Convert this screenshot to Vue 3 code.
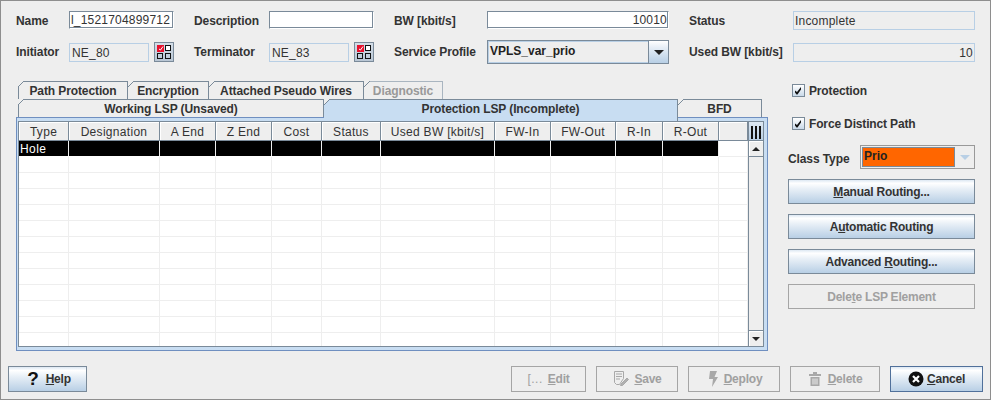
<script setup>
const cols = [
  { t: 'Type', w: 50 }, { t: 'Designation', w: 91 }, { t: 'A End', w: 56 }, { t: 'Z End', w: 56 },
  { t: 'Cost', w: 50 }, { t: 'Status', w: 59 }, { t: 'Used BW [kbit/s]', w: 114 }, { t: 'FW-In', w: 56 },
  { t: 'FW-Out', w: 65 }, { t: 'R-In', w: 47 }, { t: 'R-Out', w: 56 }, { t: '', w: 29 }
]
const gridCols = cols.map(c => c.w + 'px').join(' ')
const emptyRows = Array.from({ length: 12 }, (_, i) => i)
const tabsTop = [
  { t: 'Path Protection', w: 110 }, { t: 'Encryption', w: 81 },
  { t: 'Attached Pseudo Wires', w: 155 }, { t: 'Diagnostic', w: 79, dis: true }
]
</script>

<template>
  <div class="win">
    <div class="form">
      <span class="lab">Name</span>
      <input class="edit" value="l_1521704899712" />
      <span class="lab">Description</span>
      <input class="edit" value="" />
      <span class="lab">BW [kbit/s]</span>
      <input class="edit right" value="10010" />
      <span class="lab">Status</span>
      <div class="ro">Incomplete</div>

      <span class="lab">Initiator</span>
      <div class="pick">
        <div class="ro short">NE_80</div>
        <button class="gridbtn"><svg width="18" height="18" viewBox="0 0 18 18"><rect x="2.5" y="2.5" width="6" height="6" fill="#e8112d" stroke="#e8112d"/><path d="M4 6l1.500 1L8 3.500" stroke="#fff" fill="none"/><rect x="10.500" y="2.500" width="5" height="5" fill="#fff" stroke="#111"/><rect x="2.500" y="10.500" width="5" height="5" fill="none" stroke="#111"/><rect x="10.500" y="10.500" width="5" height="5" fill="none" stroke="#111"/></svg></button>
      </div>
      <span class="lab">Terminator</span>
      <div class="pick">
        <div class="ro short">NE_83</div>
        <button class="gridbtn"><svg width="18" height="18" viewBox="0 0 18 18"><rect x="2.5" y="2.5" width="6" height="6" fill="#e8112d" stroke="#e8112d"/><path d="M4 6l1.500 1L8 3.500" stroke="#fff" fill="none"/><rect x="10.500" y="2.500" width="5" height="5" fill="#fff" stroke="#111"/><rect x="2.500" y="10.500" width="5" height="5" fill="none" stroke="#111"/><rect x="10.500" y="10.500" width="5" height="5" fill="none" stroke="#111"/></svg></button>
      </div>
      <span class="lab">Service Profile</span>
      <div class="combo">
        <div class="combo-val">VPLS_var_prio</div>
        <div class="combo-btn"><i class="tri"></i></div>
      </div>
      <span class="lab">Used BW [kbit/s]</span>
      <div class="ro right">10</div>
    </div>

    <div class="main">
      <div class="tabs">
        <div class="tabrow first">
          <div v-for="tab in tabsTop" :key="tab.t" class="tab" :class="{ dis: tab.dis }" :style="{ width: tab.w + 'px' }">{{ tab.t }}</div>
        </div>
        <div class="tabrow second">
          <div class="tab" style="width: 306px">Working LSP (Unsaved)</div>
          <div class="tab sel" style="width: 354px">Protection LSP (Incomplete)</div>
          <div class="tab" style="width: 84px">BFD</div>
        </div>
        <div class="panel">
          <div class="tablebox">
            <div class="tablecol">
              <div class="thead" :style="{ gridTemplateColumns: gridCols }">
                <div v-for="c in cols" :key="c.t" class="th">{{ c.t }}</div>
              </div>
              <div class="trow hole" :style="{ gridTemplateColumns: gridCols }">
                <div v-for="(c, i) in cols" :key="c.t" class="td" :class="{ black: i < 11 }">{{ i === 0 ? 'Hole' : '' }}</div>
              </div>
              <div v-for="r in emptyRows" :key="r" class="trow" :style="{ gridTemplateColumns: gridCols }">
                <div v-for="c in cols" :key="c.t" class="td"></div>
              </div>
            </div>
            <div class="sb">
              <div class="corner"><i></i><i></i><i></i></div>
              <div class="arrow"><i class="up"></i></div>
              <div class="track"></div>
              <div class="arrow bottom"><i class="tri small"></i></div>
            </div>
          </div>
        </div>
      </div>

      <div class="side">
        <label class="chk"><span class="box"><svg width="11" height="11" viewBox="0 0 11 11"><path d="M2 5.500l2 1.500 4-5v2.500L4.500 9.500H3.500L2 7.500z" fill="#111"/></svg></span>Protection</label>
        <label class="chk second-chk"><span class="box"><svg width="11" height="11" viewBox="0 0 11 11"><path d="M2 5.500l2 1.500 4-5v2.500L4.500 9.500H3.500L2 7.500z" fill="#111"/></svg></span>Force Distinct Path</label>
        <div class="classrow">
          <span class="lab norm">Class Type</span>
          <div class="ccombo">
            <div class="orange">Prio</div>
            <div class="cbtn"><i class="tri pale"></i></div>
          </div>
        </div>
        <button class="btn rt"><u>M</u>anual Routing...</button>
        <button class="btn rt">A<u>u</u>tomatic Routing</button>
        <button class="btn rt">Advanced <u>R</u>outing...</button>
        <button class="btn rt off">Dele<u>t</u>e LSP Element</button>
      </div>
    </div>

    <div class="foot">
      <button class="btn fb help"><span class="q">?</span><span><u>H</u>elp</span></button>
      <div class="spring"></div>
      <button class="btn fb off edit-b"><span class="brk">[...</span><span><u>E</u>dit</span></button>
      <button class="btn fb off save-b">
        <svg width="18" height="18" viewBox="0 0 18 18" fill="none" stroke="#a8a8a8"><path d="M2.500 1.500h9v7l-4 6h-3l-2-2z"/><path d="M4 4h6M4 6.500h6M4 9h4" /><path d="M9 14l6-6 1.500 1.500-6 6H8.500z" fill="#b0b0b0"/></svg>
        <span><u>S</u>ave</span>
      </button>
      <button class="btn fb off deploy-b">
        <svg width="14" height="18" viewBox="0 0 14 18"><path d="M4 1h7L8.500 7H12L6 17l1-8H3z" fill="#a8a8a8"/></svg>
        <span><u>D</u>eploy</span>
      </button>
      <button class="btn fb off del-b">
        <svg width="14" height="18" viewBox="0 0 14 18"><path d="M1 4h12v2H1zM5 2h4v2H5zM2.500 7h9v9h-9z" fill="#a8a8a8"/><path d="M5 8.500v6M7 8.500v6M9 8.500v6" stroke="#eee"/></svg>
        <span><u>D</u>elete</span>
      </button>
      <button class="btn fb cancel-b">
        <svg width="16" height="16" viewBox="0 0 16 16"><circle cx="8" cy="8" r="7.500" fill="#111"/><path d="M5 5l6 6M11 5l-6 6" stroke="#fff" stroke-width="2.200"/></svg>
        <span><u>C</u>ancel</span>
      </button>
    </div>
  </div>
</template>

<style scoped>
.win {
  width: 991px;
  height: 400px;
  box-sizing: border-box;
  border: 1px solid #8e8e8e;
  background: #eeeeee;
  font: 12px "Liberation Sans", Arial, sans-serif;
  color: #333;
  overflow: hidden;
}
.form {
  display: grid;
  grid-template-columns: 53px 125px 75px 125px 93px 202px 104px 182px;
  grid-template-rows: 19px 24px;
  row-gap: 10px;
  padding: 10px 0 0 15px;
  align-items: center;
}
.lab { font-weight: bold; color: #333; white-space: nowrap; letter-spacing: -0.1px; }
.edit {
  box-sizing: border-box;
  width: 105px;
  height: 18px;
  border: 1px solid #7a8a99;
  border-right-color: #fff;
  border-bottom-color: #fff;
  background: #fff;
  padding: 0 1px;
  font: 12px "Liberation Sans", Arial, sans-serif;
  letter-spacing: 0.2px;
  color: #333;
  outline: none;
  align-self: start;
  box-shadow: inset -1px -1px 0 #7a8a99;
}
.edit.right { width: 182px; text-align: right; }
.ro {
  box-sizing: border-box;
  width: 182px;
  height: 19px;
  line-height: 18px;
  padding: 0 1px;
  border: 1px solid #b8cfe5;
  background: #eeeeee;
  color: #333;
  letter-spacing: 0.2px;
}
.ro.right { text-align: right; }
.ro.short { width: 80px; padding-left: 2px; }
.pick { display: flex; align-items: center; gap: 5px; }
.gridbtn {
  width: 20px;
  height: 20px;
  padding: 0;
  border: 1px solid #7a8a99;
  background: linear-gradient(#d4dde7, #b9c6d4);
  display: flex;
  align-items: center;
  justify-content: center;
}
.combo {
  box-sizing: border-box;
  width: 182px;
  height: 24px;
  border: 1px solid #7a8a99;
  display: flex;
}
.combo-val {
  flex: 1;
  background: #eeeeee;
  border: 1px solid #b8cfe5;
  border-width: 1px 0 1px 1px;
  padding-left: 1px;
  font-weight: bold;
  color: #222;
  line-height: 18px;
}
.combo-btn {
  width: 19px;
  border-left: 1px solid #7a8a99;
  background: linear-gradient(#fff, #e6eef6 30%, #b8cfe5);
  display: flex;
  align-items: center;
  justify-content: center;
}
.tri { width: 0; height: 0; border: 5px solid transparent; border-top: 5px solid #222; border-bottom: 0; display: block; }
.tri.pale { border-top-color: #b8cfe5; }
.tri.small { border-width: 4px 4px 0; }
.main { display: flex; gap: 20px; margin: 17px 0 0 15px; height: 270px; }
.tabs { width: 752px; }
.tabrow { display: flex; height: 18px; padding-left: 2px; }
.tab {
  box-sizing: border-box;
  position: relative;
  height: 18px;
  border: 1px solid #7a8a99;
  border-bottom: 0;
  text-align: center;
  font-weight: bold;
  color: #333;
  line-height: 19px;
  background: #eeeeee;
  letter-spacing: -0.1px;
}
.tab + .tab { border-left: 0; }
.tab::before {
  content: "";
  position: absolute;
  top: -1px;
  left: -1px;
  width: 6px;
  height: 6px;
  background: linear-gradient(135deg, #eee 42%, #7a8a99 42%, #7a8a99 58%, transparent 58%);
}
.tab + .tab::before { left: 0; }
.tab.dis { color: #999; border-color: #a9b5c0; }
.tab.sel {
  height: 23px;
  background: #c8ddf2;
  z-index: 1;
}
.panel {
  box-sizing: border-box;
  width: 752px;
  height: 234px;
  border: 1px solid #6f8fc0;
  background: #c8ddf2;
  padding: 3px 3px 3px 1px;
}
.tablebox {
  box-sizing: border-box;
  height: 226px;
  border: 1px solid #7a8a99;
  display: flex;
  background: #fff;
  position: relative;
  z-index: 2;
}
.tablecol { width: 729px; overflow: hidden; }
.thead { display: grid; height: 19px; }
.th {
  box-sizing: border-box;
  height: 19px;
  border-right: 1px solid #7a8a99;
  border-bottom: 1px solid #7a8a99;
  box-shadow: inset 1px 1px 0 #fff;
  background: #eeeeee;
  text-align: center;
  line-height: 20px;
  color: #333;
  white-space: nowrap;
  letter-spacing: 0.3px;
}
.trow { display: grid; height: 16px; }
.td {
  box-sizing: border-box;
  height: 16px;
  border-right: 1px solid #eeeeee;
  border-bottom: 1px solid #eeeeee;
  background: #fff;
}
.td.black {
  background: #000;
  color: #fff;
  height: 15px;
  border-bottom: 0;
  border-right-color: #eee;
  line-height: 16px;
  padding-left: 1px;
  letter-spacing: 0.4px;
}
.sb {
  box-sizing: border-box;
  width: 15px;
  border-left: 1px solid #7a8a99;
  display: flex;
  flex-direction: column;
  background: #eeeeee;
}
.corner {
  height: 19px;
  box-sizing: border-box;
  border-bottom: 1px solid #7a8a99;
  background: linear-gradient(#dde8f3, #b8cfe5);
  display: flex;
  gap: 2px;
  justify-content: center;
  padding-top: 4px;
}
.corner i { width: 2px; height: 13px; background: #111; display: block; }
.arrow {
  box-sizing: border-box;
  height: 16px;
  border-bottom: 1px solid #7a8a99;
  display: flex;
  align-items: center;
  justify-content: center;
  background: #eeeeee;
  box-shadow: inset 1px 1px 0 #fff;
}
.arrow.bottom { border-bottom: 0; border-top: 1px solid #7a8a99; }
.up { width: 0; height: 0; border: 4px solid transparent; border-top: 0; border-bottom: 4px solid #222; display: block; }
.track { flex: 1; background: #eeeeee; }
.side { width: 187px; display: flex; flex-direction: column; }
.chk {
  display: flex;
  align-items: center;
  height: 19px;
  padding-left: 4px;
  gap: 4px;
  font-weight: bold;
  color: #333;
  letter-spacing: -0.15px;
}
.second-chk { margin-top: 14px; }
.box {
  box-sizing: border-box;
  width: 13px;
  height: 13px;
  border: 1px solid #7a8a99;
  background: linear-gradient(#fff, #c9d9e9);
  display: flex;
  align-items: center;
  justify-content: center;
}
.classrow { display: flex; align-items: center; margin-top: 12px; height: 24px; padding-top: 1px; box-sizing: border-box; }
.norm { width: 72px; padding-top: 2px; }
.ccombo {
  box-sizing: border-box;
  width: 115px;
  height: 24px;
  margin-top: -1px;
  border: 1px solid #999;
  display: flex;
}
.orange {
  width: 93px;
  margin: 1px 0 1px 1px;
  box-sizing: border-box;
  height: 20px;
  background: #ff6600;
  border: 1px solid #7a8a99;
  line-height: 17px;
  padding-left: 1px;
  font-weight: bold;
  color: #222;
}
.cbtn { flex: 1; display: flex; align-items: center; justify-content: center; }
.btn {
  box-sizing: border-box;
  border: 1px solid #7a8a99;
  background: linear-gradient(#dde8f3 0, #fff 14%, #e9f0f7 38%, #b8cfe5 100%);
  font: bold 12px "Liberation Sans", Arial, sans-serif;
  letter-spacing: -0.22px;
  color: #333;
  padding: 0;
}
.rt { width: 187px; height: 25px; margin-top: 10px; }
.btn.off { background: #eeeeee; border-color: #a5a5a5; color: #a0a0a0; }
.foot { display: flex; gap: 10px; padding: 0 7px; margin-top: 15px; height: 26px; }
.spring { flex: 1; }
.fb {
  height: 26px;
  display: flex;
  align-items: center;
  justify-content: center;
  gap: 7px;
}
.help { width: 79px; padding-left: 3px; }
.q { font-size: 19px; color: #111; line-height: 20px; }
.brk { font-weight: normal; letter-spacing: .5px; }
.edit-b { width: 75px; gap: 5px; }
.save-b { width: 82px; gap: 4px; }
.deploy-b { width: 92px; gap: 4px; }
.del-b { width: 90px; gap: 6px; }
.cancel-b { width: 93px; gap: 3px; border-color: #50709a; }
</style>

<style>
html, body { margin: 0; padding: 0; }
</style>
